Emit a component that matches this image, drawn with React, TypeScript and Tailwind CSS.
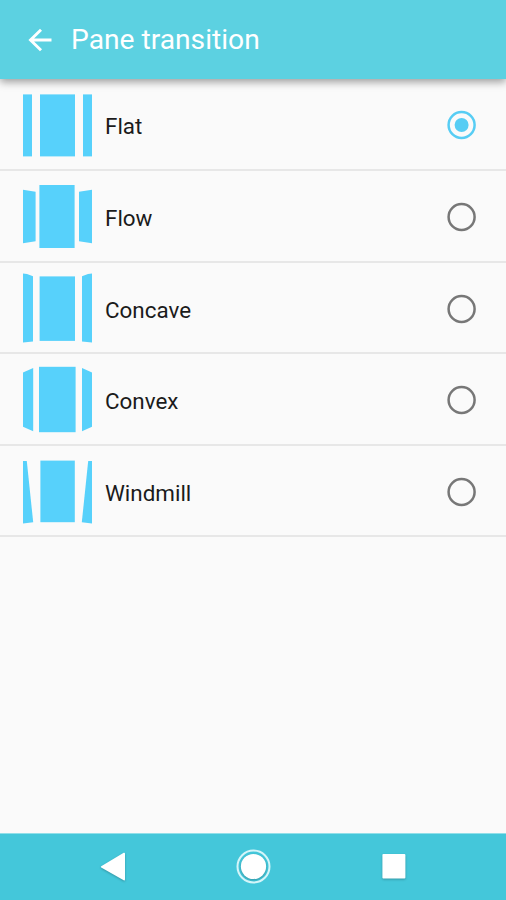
import React from "react";

type Option = {
  name: string;
  row: string;
  top: number;
  center: [number, number, number, number];
  left: string;
  right: string;
  selected?: boolean;
};

// Pane shapes are drawn in screen units; `top` is the first line of each row.
const options: Option[] = [
  {
    name: "Flat",
    row: "h-[92px]",
    top: 79,
    center: [40, 94.4, 35, 62],
    left: "23,94.4 32,94.4 32,156.4 23,156.4",
    right: "83,94.4 92,94.4 92,156.4 83,156.4",
    selected: true,
  },
  {
    name: "Flow",
    row: "h-[92px]",
    top: 171,
    center: [39.4, 185, 35.2, 63],
    left: "23,189.8 35.6,191.8 35.6,241.3 23,243.3",
    right: "92,189.8 79,191.8 79,241.3 92,243.3",
  },
  {
    name: "Concave",
    row: "h-[91px]",
    top: 263,
    center: [39.6, 276.4, 35.4, 64.5],
    left: "23,273.4 27,274 33,276.2 33,341.5 23,342.6",
    right: "92,273.4 88,274 82,276.2 82,341.5 92,342.6",
  },
  {
    name: "Convex",
    row: "h-[92px]",
    top: 354,
    center: [39, 366.8, 36.6, 65.4],
    left: "23,372.4 33.2,368 33.2,431.2 23,426.8",
    right: "92,372.4 82,368 82,431.2 92,426.8",
  },
  {
    name: "Windmill",
    row: "h-[91px]",
    top: 446,
    center: [40.4, 460.6, 34.4, 61.6],
    left: "23,461 26.8,461 33.2,522.3 23,523.4",
    right: "92,461 88.2,461 81.8,522.3 92,523.4",
  },
];

function PaneIcon({ option }: { option: Option }) {
  const [x, y, width, height] = option.center;
  return (
    <svg
      className="h-[89px] w-[69px] shrink-0 self-start fill-[#57d1fb]"
      viewBox={`23 ${option.top} 69 89`}
      aria-hidden="true"
    >
      <polygon points={option.left} />
      <rect x={x} y={y} width={width} height={height} />
      <polygon points={option.right} />
    </svg>
  );
}

function Radio({ selected }: { selected?: boolean }) {
  return (
    <svg className="mt-[2px] size-[30px]" viewBox="0 0 30 30" fill="none" role="radio" aria-checked={!!selected}>
      <circle cx="14.6" cy="15" r="13" strokeWidth="2.5" className={selected ? "stroke-[#57cdf4]" : "stroke-[#777]"} />
      {selected && <circle cx="14.6" cy="15" r="7" className="fill-[#57cdf4]" />}
    </svg>
  );
}

export default function App() {
  return (
    <div className="flex h-[900px] w-[506px] flex-col overflow-hidden bg-[#fafafa] font-[Roboto,sans-serif]">
      <header className="z-10 flex h-[79px] shrink-0 items-center bg-[#5cd1e1] pl-[28px] pt-px text-white shadow-[0_3px_8px_rgba(0,0,0,0.38)]">
        <svg className="h-6 w-6" viewBox="0 0 24 24" fill="none" stroke="currentColor" strokeWidth="2.9" aria-hidden="true">
          <path d="M23.5 12H3M13 1.7L2.5 12L13 22.3" />
        </svg>
        <h1 className="ml-[19px] text-[28.2px] leading-8">Pane transition</h1>
      </header>

      <main className="flex-1">
        {options.map((option) => (
          <div
            key={option.name}
            className={`${option.row} flex items-center border-b-2 border-[#e7e7e7] pl-[23px] pr-[29px]`}
          >
            <PaneIcon option={option} />
            <span className="ml-[13px] mt-[4px] flex-1 text-[22.4px] leading-7 text-[#1b1b1b]">{option.name}</span>
            <Radio selected={option.selected} />
          </div>
        ))}
      </main>

      <nav className="flex h-[67px] shrink-0 items-center border-t border-[#91dfe9] bg-[#44c7da] pl-[99px]">
        <svg className="h-[38px] w-[310px]" viewBox="99 848 310 38" fill="white" aria-hidden="true">
          <g className="drop-shadow-[0_1px_1px_rgba(0,0,0,0.25)]">
            <path d="M101.2 866.2L123.7 852.8Q125 852.2 125 853.8V879.3Q125 881 123.7 880.2L101.2 867.4Q100.4 866.8 101.2 866.2Z" />
            <circle cx="253.5" cy="866.5" r="12.6" />
            <rect x="382.4" y="854" width="23" height="24.5" rx="1" />
          </g>
          <circle cx="253.5" cy="866.5" r="16" fill="none" stroke="#d5f5f9" strokeWidth="2" />
        </svg>
      </nav>
    </div>
  );
}
